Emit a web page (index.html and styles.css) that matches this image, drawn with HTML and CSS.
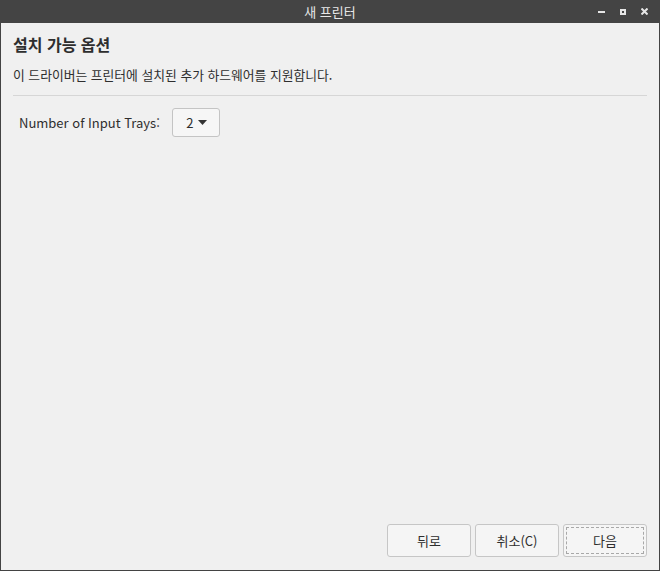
FILE: index.html
```html
<!DOCTYPE html>
<html lang="ko">

<head>
  <meta charset="UTF-8" />
  <title>새 프린터</title>
  <link rel="stylesheet" href="styles.css">
</head>

<body>
  <div class="window">
    <header class="titlebar">
      <span class="title">새 프린터</span>
      <div class="window-controls">
        <span class="ctl ctl-min"></span>
        <span class="ctl ctl-max"></span>
        <svg class="ctl-close" width="7" height="7" viewBox="0 0 7 7">
          <path d="M0.5 0.5 L6.5 6.5 M6.5 0.5 L0.5 6.5" stroke="#e6e6e6" stroke-width="2" />
        </svg>
      </div>
    </header>

    <div class="content">
      <h1 class="page-title">설치 가능 옵션</h1>
      <p class="page-desc">이 드라이버는 프린터에 설치된 추가 하드웨어를 지원합니다.</p>
      <hr class="sep">

      <div class="option-row">
        <span class="option-label">Number of Input Trays:</span>
        <button class="combo">
          <span>2</span>
          <svg width="9" height="5" viewBox="0 0 9 5"><path d="M0 0 L9 0 L4.5 5 Z" fill="#333" /></svg>
        </button>
      </div>

      <div class="spacer"></div>

      <div class="actions">
        <button class="btn">뒤로</button>
        <button class="btn">취소(C)</button>
        <button class="btn btn-focus">다음</button>
      </div>
    </div>
  </div>
</body>

</html>
```

FILE: styles.css
```css
* {
  box-sizing: border-box;
}

body {
  margin: 0;
  font-family: "Noto Sans CJK KR", "Noto Sans", sans-serif;
  font-size: 13px;
  color: #2e2e2e;
  background: #444;
}

.window {
  width: 660px;
  height: 571px;
  display: flex;
  flex-direction: column;
  background: #f0f0f0;
  border: 1px solid #434343;
  border-top: none;
}

.titlebar {
  height: 23px;
  flex-shrink: 0;
  background: #444444;
  color: #e8e8e8;
  display: flex;
  align-items: center;
  justify-content: center;
  position: relative;
  margin: 0 -1px;
}

.title {
  font-size: 13px;
}

.window-controls {
  position: absolute;
  right: 12px;
  top: 0;
  height: 23px;
  display: flex;
  align-items: center;
  gap: 15px;
}

.ctl {
  display: block;
  background: #e6e6e6;
}

.ctl-min {
  width: 7px;
  height: 2px;
}

.ctl-max {
  width: 6px;
  height: 6px;
  background: none;
  border: 2px solid #e6e6e6;
}

.content {
  flex: 1;
  display: flex;
  flex-direction: column;
  padding: 10px 12px 13px 12px;
}

.page-title {
  margin: 0;
  font-size: 16px;
  font-weight: bold;
  line-height: 22px;
}

.page-desc {
  margin: 10px 0 0 0;
  font-size: 12.8px;
  line-height: 20px;
}

.sep {
  border: none;
  border-top: 1px solid #d6d6d6;
  margin: 10px 0 0 0;
}

.option-row {
  display: flex;
  align-items: center;
  gap: 12px;
  margin-top: 12px;
  padding-left: 6px;
}

.combo {
  width: 48px;
  height: 29px;
  display: flex;
  align-items: center;
  justify-content: center;
  gap: 5px;
  border: 1px solid #c4c4c4;
  border-radius: 3px;
  background: #f6f6f6;
  font-family: inherit;
  font-size: 13px;
  color: #2e2e2e;
  padding: 0 0 0 2px;
}

.spacer {
  flex: 1;
}

.actions {
  display: flex;
  justify-content: flex-end;
  gap: 4px;
}

.btn {
  width: 84px;
  height: 33px;
  border: 1px solid #c6c6c6;
  border-radius: 3px;
  background: #f5f5f5;
  font-family: inherit;
  font-size: 13px;
  color: #2e2e2e;
}

.btn-focus {
  outline: 1px dashed #a8a8a8;
  outline-offset: -4px;
}
```
